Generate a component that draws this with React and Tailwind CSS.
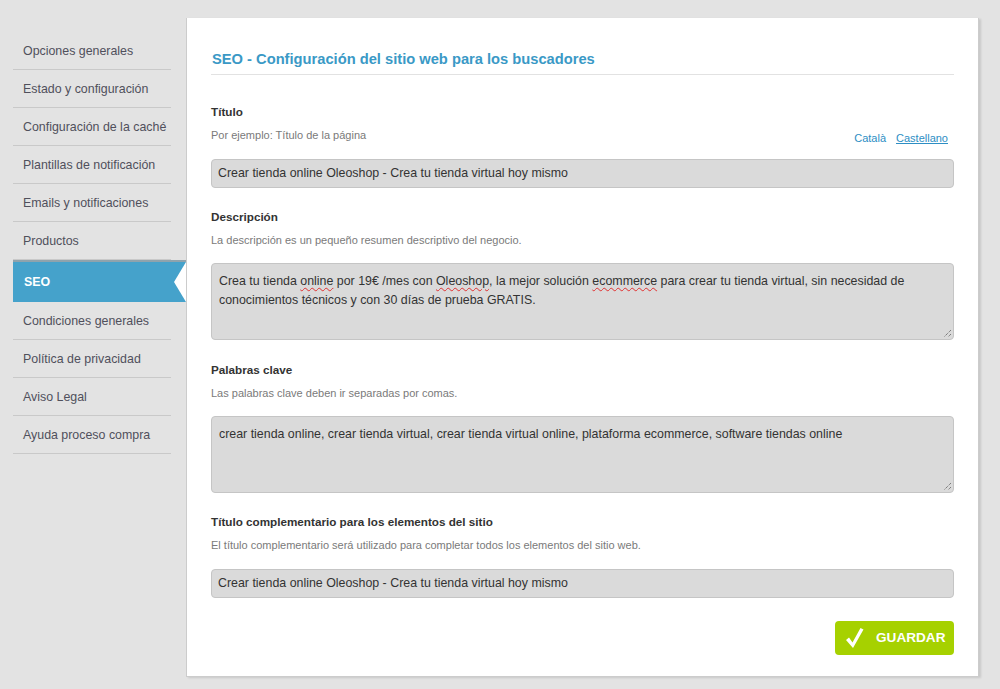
import React from "react";

const menu = [
  "Opciones generales",
  "Estado y configuración",
  "Configuración de la caché",
  "Plantillas de notificación",
  "Emails y notificaciones",
  "Productos",
  "SEO",
  "Condiciones generales",
  "Política de privacidad",
  "Aviso Legal",
  "Ayuda proceso compra",
];

function Spell({ children }) {
  return (
    <span className="underline decoration-wavy decoration-[#e03030] decoration-1 underline-offset-2">
      {children}
    </span>
  );
}

function Grip() {
  return (
    <svg
      className="absolute right-[1px] bottom-[1px]"
      width="10"
      height="10"
      viewBox="0 0 10 10"
    >
      <line x1="9" y1="2" x2="2" y2="9" stroke="#555" strokeDasharray="1 1" />
      <line x1="9" y1="6" x2="6" y2="9" stroke="#555" strokeDasharray="1 1" />
    </svg>
  );
}

function Field({ label, hint, right, className = "" }) {
  return (
    <div className={className}>
      <div className="text-[11.7px] leading-[16px] font-bold text-[#333]">{label}</div>
      <div className="flex items-end justify-between mt-[7px]">
        <div className="text-[11px] leading-[16px] text-[#7a7a7a]">{hint}</div>
        {right}
      </div>
    </div>
  );
}

const boxCls =
  "bg-[#dadada] border border-[#c5c5c5] rounded-[4px] text-[12.4px] text-[#333]";

export default function App() {
  return (
    <div
      className="min-h-[689px] w-full bg-[#e3e3e3] flex items-start pt-[18px]"
      style={{ fontFamily: '"Liberation Sans", Arial, sans-serif' }}
    >
      {/* sidebar */}
      <div className="w-[186px] pl-[13px] pt-[14px] shrink-0">
        {menu.map((item) =>
          item === "SEO" ? (
            <div
              key={item}
              className="relative h-[42px] bg-[#45a2cb] border-t-2 border-[#8fa3ad] flex items-center pl-[11px] text-[12.4px] font-bold text-white"
            >
              {item}
              <svg
                className="absolute right-0 top-0"
                width="13"
                height="40"
                viewBox="0 0 13 40"
              >
                <polygon points="13,0 1,20 13,40" fill="#ffffff" />
              </svg>
            </div>
          ) : (
            <div
              key={item}
              className="mr-[15px] h-[38px] border-b border-[#c9c9c9] flex items-center pl-[10px] pt-[2px] text-[12.4px] text-[#50505c]"
            >
              {item}
            </div>
          )
        )}
      </div>

      {/* panel */}
      <div className="w-[793px] bg-white border-l border-r border-b border-[#cccccc] shadow-[2px_1px_2px_rgba(0,0,0,0.12)] pl-[24px] pr-[24px] pt-[32px] pb-[21px]">
        <h1 className="text-[14.7px] leading-[18px] font-bold text-[#3a99c6] pl-[1px] pb-[6px] border-b border-[#e2e2e2]">
          SEO - Configuración del sitio web para los buscadores
        </h1>

        <Field
          className="mt-[29px]"
          label="Título"
          hint="Por ejemplo: Título de la página"
          right={
            <div className="flex gap-[10px] text-[11px] leading-[16px] text-[#2d8ec4] pr-[6px] translate-y-[3px]">
              <span>Català</span>
              <span className="underline">Castellano</span>
            </div>
          }
        />
        <div className={`${boxCls} h-[29px] mt-[16px] flex items-center pl-[6px]`}>
          Crear tienda online Oleoshop - Crea tu tienda virtual hoy mismo
        </div>

        <Field
          className="mt-[21px]"
          label="Descripción"
          hint="La descripción es un pequeño resumen descriptivo del negocio."
        />
        <div className={`${boxCls} relative h-[77px] mt-[15px] px-[7px] pt-[8px] leading-[19px]`}>
          Crea tu tienda <Spell>online</Spell> por 19€ /mes con <Spell>Oleoshop</Spell>, la
          mejor solución <Spell>ecommerce</Spell> para crear tu tienda virtual, sin necesidad
          de conocimientos técnicos y con 30 días de prueba GRATIS.
          <Grip />
        </div>

        <Field
          className="mt-[22px]"
          label="Palabras clave"
          hint="Las palabras clave deben ir separadas por comas."
        />
        <div className={`${boxCls} relative h-[77px] mt-[15px] px-[7px] pt-[8px] leading-[19px]`}>
          crear tienda online, crear tienda virtual, crear tienda virtual online, plataforma
          ecommerce, software tiendas online
          <Grip />
        </div>

        <Field
          className="mt-[21px]"
          label="Título complementario para los elementos del sitio"
          hint="El título complementario será utilizado para completar todos los elementos del sitio web."
        />
        <div className={`${boxCls} h-[29px] mt-[16px] flex items-center pl-[6px]`}>
          Crear tienda online Oleoshop - Crea tu tienda virtual hoy mismo
        </div>

        <div className="flex justify-end mt-[23px]">
          <button className="w-[119px] h-[34px] bg-[#a6d100] rounded-[4px] flex items-center pl-[10px] gap-[12px] text-white text-[13.6px] font-bold">
            <svg width="19" height="22" viewBox="0 0 19 22">
              <path
                d="M1 13 L4 10.5 L7.5 15.5 L15.5 1 L18.5 2.5 L8 21 Z"
                fill="#ffffff"
              />
            </svg>
            GUARDAR
          </button>
        </div>
      </div>
    </div>
  );
}
